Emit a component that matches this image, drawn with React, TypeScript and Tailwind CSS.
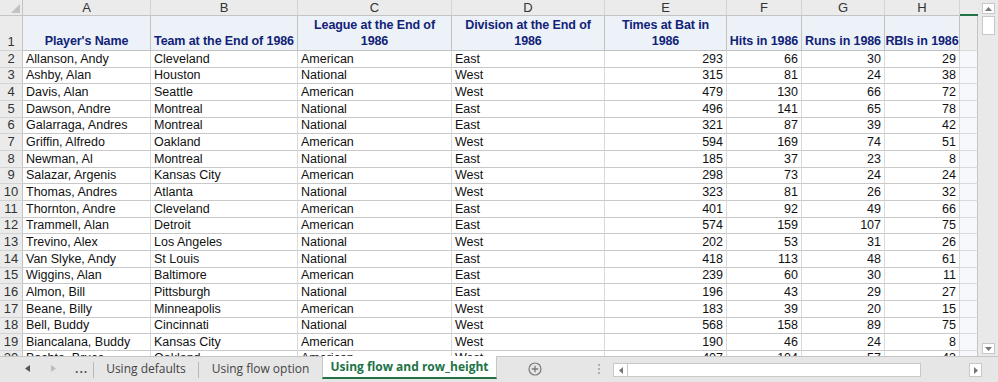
import React from "react";

const COLS = "grid grid-cols-[23px_128px_147px_154px_153px_122px_75px_83px_75px_18px]";

type Row = [string, string, string, string, number, number, number, number];

const rows: Row[] = [
  ["Allanson, Andy", "Cleveland", "American", "East", 293, 66, 30, 29],
  ["Ashby, Alan", "Houston", "National", "West", 315, 81, 24, 38],
  ["Davis, Alan", "Seattle", "American", "West", 479, 130, 66, 72],
  ["Dawson, Andre", "Montreal", "National", "East", 496, 141, 65, 78],
  ["Galarraga, Andres", "Montreal", "National", "East", 321, 87, 39, 42],
  ["Griffin, Alfredo", "Oakland", "American", "West", 594, 169, 74, 51],
  ["Newman, Al", "Montreal", "National", "East", 185, 37, 23, 8],
  ["Salazar, Argenis", "Kansas City", "American", "West", 298, 73, 24, 24],
  ["Thomas, Andres", "Atlanta", "National", "West", 323, 81, 26, 32],
  ["Thornton, Andre", "Cleveland", "American", "East", 401, 92, 49, 66],
  ["Trammell, Alan", "Detroit", "American", "East", 574, 159, 107, 75],
  ["Trevino, Alex", "Los Angeles", "National", "West", 202, 53, 31, 26],
  ["Van Slyke, Andy", "St Louis", "National", "East", 418, 113, 48, 61],
  ["Wiggins, Alan", "Baltimore", "American", "East", 239, 60, 30, 11],
  ["Almon, Bill", "Pittsburgh", "National", "East", 196, 43, 29, 27],
  ["Beane, Billy", "Minneapolis", "American", "West", 183, 39, 20, 15],
  ["Bell, Buddy", "Cincinnati", "National", "West", 568, 158, 89, 75],
  ["Biancalana, Buddy", "Kansas City", "American", "West", 190, 46, 24, 8],
  ["Bochte, Bruce", "Oakland", "American", "West", 407, 104, 57, 43],
];

const letters = ["A", "B", "C", "D", "E", "F", "G", "H"];
const headers: string[][] = [
  ["Player's Name"],
  ["Team at the End of 1986"],
  ["League at the End of", "1986"],
  ["Division at the End of", "1986"],
  ["Times at Bat in", "1986"],
  ["Hits in 1986"],
  ["Runs in 1986"],
  ["RBIs in 1986"],
];

function TextCell({ v }: { v: string }) {
  return (
    <div className="flex items-end overflow-hidden whitespace-nowrap border-b border-r border-b-[#c9c9c9] border-r-[#dadada] bg-white px-[3px] pb-[1px] leading-[14px]">
      {v}
    </div>
  );
}
function NumCell({ v }: { v: number }) {
  return (
    <div className="flex items-end justify-end overflow-hidden whitespace-nowrap border-b border-r border-b-[#c9c9c9] border-r-[#dadada] bg-white px-[3px] pb-[1px] leading-[14px]">
      {v}
    </div>
  );
}

export default function App() {
  return (
    <div className="flex h-[382px] w-[998px] flex-col overflow-hidden bg-white font-['Liberation_Sans',Arial,sans-serif] text-[12.5px] text-[#111]">
      {/* sheet area */}
      <div className="flex h-[356px] shrink-0 overflow-hidden">
        <div className="w-[978px] shrink-0">
          {/* column letters */}
          <div className={`${COLS} h-[16px]`}>
            <div className="relative border-b border-r border-[#c4c4c4] bg-[#ebebeb]">
              <svg className="absolute bottom-[2px] right-[2px]" width="9" height="9" viewBox="0 0 9 9">
                <polygon points="9,0 9,9 0,9" fill="#c2c2c2" />
              </svg>
            </div>
            {letters.map((l) => (
              <div
                key={l}
                className="flex items-center justify-center border-b border-r border-b-[#c4c4c4] border-r-[#d4d4d4] bg-[#ebebeb] text-[13px] leading-none text-[#333]"
              >
                {l}
              </div>
            ))}
            <div className="border-b-2 border-[#217346] bg-[#ebebeb]" />
          </div>
          {/* header row 1 */}
          <div className={`${COLS} h-[35px]`}>
            <div className="flex items-end justify-center border-b border-r border-b-[#d4d4d4] border-r-[#c4c4c4] bg-[#ebebeb] pb-[1px] text-[13px] leading-[14px] text-[#333]">
              1
            </div>
            {headers.map((h) => (
              <div
                key={h[0]}
                className="flex flex-col items-center justify-end whitespace-nowrap border-b border-r border-[#c1c1c1] bg-[#EDF2F9] pb-[1px] text-center font-bold leading-[16px] tracking-[-0.1px] text-[#112277]"
              >
                {h.map((line) => (
                  <span key={line}>{line}</span>
                ))}
              </div>
            ))}
            <div className="border-b border-r border-b-[#dadada] border-r-[#c4c4c4] bg-[#eeeeee]" />
          </div>
          {rows.map((r, i) => (
            <div key={i} className={`${COLS} h-[16.667px]`}>
              <div className="flex items-end justify-center border-b border-r border-b-[#d4d4d4] border-r-[#c4c4c4] bg-[#ebebeb] pb-[1px] text-[13px] leading-[14px] text-[#333]">
                {i + 2}
              </div>
              <TextCell v={r[0]} />
              <TextCell v={r[1]} />
              <TextCell v={r[2]} />
              <TextCell v={r[3]} />
              <NumCell v={r[4]} />
              <NumCell v={r[5]} />
              <NumCell v={r[6]} />
              <NumCell v={r[7]} />
              <div className="border-b border-r border-b-[#dadada] border-r-[#c4c4c4] bg-[#f7f8fb]" />
            </div>
          ))}
        </div>
        {/* vertical scrollbar */}
        <div className="flex w-[20px] shrink-0 flex-col items-center bg-[#e9e9e9] pt-[3px]">
          <div className="flex h-[11px] w-[13px] items-center justify-center border border-[#c8c8c8] bg-white">
            <svg width="7" height="4" viewBox="0 0 7 4">
              <polygon points="0,4 7,4 3.5,0" fill="#777" />
            </svg>
          </div>
          <div className="mt-[2px] h-[19px] w-[13px] border border-[#c8c8c8] bg-white" />
          <div className="flex-1" />
          <div className="mb-[2px] flex h-[11px] w-[13px] items-center justify-center border border-[#c8c8c8] bg-white">
            <svg width="7" height="4" viewBox="0 0 7 4">
              <polygon points="0,0 7,0 3.5,4" fill="#777" />
            </svg>
          </div>
        </div>
      </div>
      {/* tab bar */}
      <div className="flex h-[26px] shrink-0 items-start border-t border-[#c6c6c6] bg-[#e6e6e6] font-['Open_Sans','Noto_Sans',sans-serif] text-[12px] text-[#444]">
        <div className="flex h-[23px] w-[93px] shrink-0 items-center">
          <svg className="ml-[25px]" width="5" height="7" viewBox="0 0 5 7">
            <polygon points="5,0 5,7 0,3.5" fill="#555" />
          </svg>
          <svg className="ml-[21px]" width="5" height="7" viewBox="0 0 5 7">
            <polygon points="0,0 0,7 5,3.5" fill="#bdbdbd" />
          </svg>
          <span className="ml-[19px] font-bold leading-none tracking-[1px] text-[#555]">...</span>
        </div>
        <div className="mt-[5px] h-[16px] w-px bg-[#b9b9b9]" />
        <div className="flex h-[23px] w-[104px] shrink-0 items-center justify-center">Using defaults</div>
        <div className="mt-[5px] h-[16px] w-px bg-[#b9b9b9]" />
        <div className="flex h-[23px] w-[123px] shrink-0 items-center justify-center">Using flow option</div>
        <div className="-mt-px flex h-[23px] w-[175px] shrink-0 items-center justify-center border-x border-b-2 border-x-[#c6c6c6] border-b-[#217346] bg-white font-bold text-[#217346]">
          Using flow and row_height
        </div>
        <div className="flex h-[23px] w-[76px] shrink-0 items-center justify-center">
          <svg width="14" height="14" viewBox="0 0 14 14">
            <circle cx="7" cy="7" r="6" fill="none" stroke="#7a7a7a" strokeWidth="1.2" />
            <path d="M7 3.8v6.4M3.8 7h6.4" stroke="#7a7a7a" strokeWidth="1.3" />
          </svg>
        </div>
        <div className="ml-[25px] flex h-[23px] w-[2px] shrink-0 flex-col items-center justify-center gap-[2px]">
          <div className="h-[2px] w-[2px] bg-[#b0b0b0]" />
          <div className="h-[2px] w-[2px] bg-[#b0b0b0]" />
          <div className="h-[2px] w-[2px] bg-[#b0b0b0]" />
        </div>
        <div className="ml-[13px] mt-[6px] flex h-[14px] w-[369px] shrink-0 items-stretch">
          <div className="flex w-[15px] items-center justify-center border border-[#c8c8c8] bg-white">
            <svg width="4" height="7" viewBox="0 0 4 7">
              <polygon points="4,0 4,7 0,3.5" fill="#777" />
            </svg>
          </div>
          <div className="w-[293px] border border-l-0 border-[#c8c8c8] bg-white" />
          <div className="flex-1" />
          <div className="flex w-[13px] items-center justify-center border border-[#c8c8c8] bg-white">
            <svg width="4" height="7" viewBox="0 0 4 7">
              <polygon points="0,0 0,7 4,3.5" fill="#777" />
            </svg>
          </div>
        </div>
      </div>
    </div>
  );
}
